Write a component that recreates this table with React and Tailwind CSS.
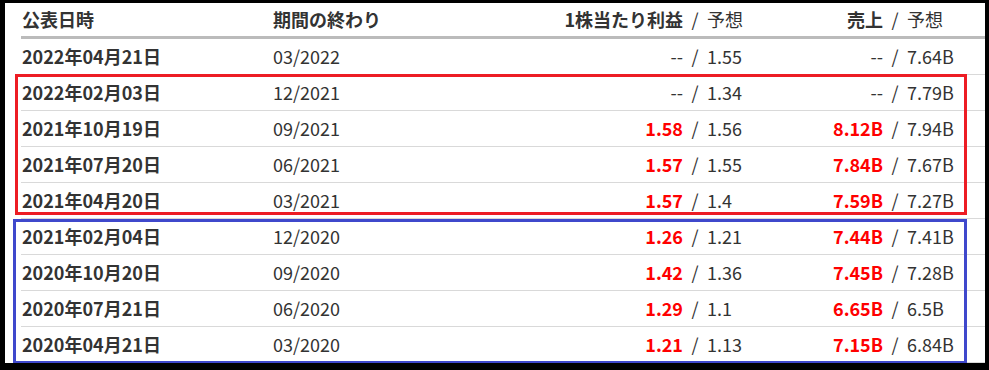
const rows = [
  { date: "2022年04月21日", period: "03/2022", eps: "--", epsEst: "1.55", rev: "--", revEst: "7.64B" },
  { date: "2022年02月03日", period: "12/2021", eps: "--", epsEst: "1.34", rev: "--", revEst: "7.79B" },
  { date: "2021年10月19日", period: "09/2021", eps: "1.58", epsEst: "1.56", rev: "8.12B", revEst: "7.94B" },
  { date: "2021年07月20日", period: "06/2021", eps: "1.57", epsEst: "1.55", rev: "7.84B", revEst: "7.67B" },
  { date: "2021年04月20日", period: "03/2021", eps: "1.57", epsEst: "1.4", rev: "7.59B", revEst: "7.27B" },
  { date: "2021年02月04日", period: "12/2020", eps: "1.26", epsEst: "1.21", rev: "7.44B", revEst: "7.41B" },
  { date: "2020年10月20日", period: "09/2020", eps: "1.42", epsEst: "1.36", rev: "7.45B", revEst: "7.28B" },
  { date: "2020年07月21日", period: "06/2020", eps: "1.29", epsEst: "1.1", rev: "6.65B", revEst: "6.5B" },
  { date: "2020年04月21日", period: "03/2020", eps: "1.21", epsEst: "1.13", rev: "7.15B", revEst: "6.84B" },
];

function Actual({ value, className }) {
  const reported = value !== "--";
  return (
    <span className={`${className} text-right ${reported ? "font-bold text-[#ff0000]" : ""}`}>
      {value}
    </span>
  );
}

export default function App() {
  return (
    <div className="w-[989px] h-[370px] bg-black pt-[3px] pl-[5px] pr-[4px] pb-[7px]">
      <div
        className="relative h-full bg-white pl-[16px] overflow-hidden text-[18px] text-[#333]"
        style={{ fontFamily: '"Noto Sans CJK JP", "Noto Sans", sans-serif' }}
      >
        {/* Header */}
        <div className="flex items-center h-[36px] border-b-[3px] border-[#bbbbbb] w-[964px]">
          <span className="w-[252px] pl-[1px] font-bold">公表日時</span>
          <span className="w-[290px] font-bold">期間の終わり</span>
          <span className="w-[120px] text-right font-bold">1株当たり利益</span>
          <span className="w-[24px] text-center">/</span>
          <span className="w-[50px]">予想</span>
          <span className="w-[126px] text-right font-bold">売上</span>
          <span className="w-[24px] text-center">/</span>
          <span className="w-[78px]">予想</span>
        </div>

        {/* Rows */}
        {rows.map((r) => (
          <div key={r.date} className="flex items-center h-[36px] border-b border-[#d9d9d9] w-[964px]">
            <span className="w-[252px] pl-[1px] font-bold">{r.date}</span>
            <span className="w-[290px]">{r.period}</span>
            <Actual value={r.eps} className="w-[120px]" />
            <span className="w-[24px] text-center">/</span>
            <span className="w-[50px]">{r.epsEst}</span>
            <Actual value={r.rev} className="w-[126px]" />
            <span className="w-[24px] text-center">/</span>
            <span className="w-[78px]">{r.revEst}</span>
          </div>
        ))}

        {/* Annotation boxes */}
        <div className="absolute left-[10px] top-[71px] w-[952px] h-[141px] border-[3px] border-[#ed1c24] pointer-events-none" />
        <div className="absolute left-[8px] top-[216px] w-[954px] h-[145px] border-[3px] border-[#3f48cc] pointer-events-none" />
      </div>
    </div>
  );
}
